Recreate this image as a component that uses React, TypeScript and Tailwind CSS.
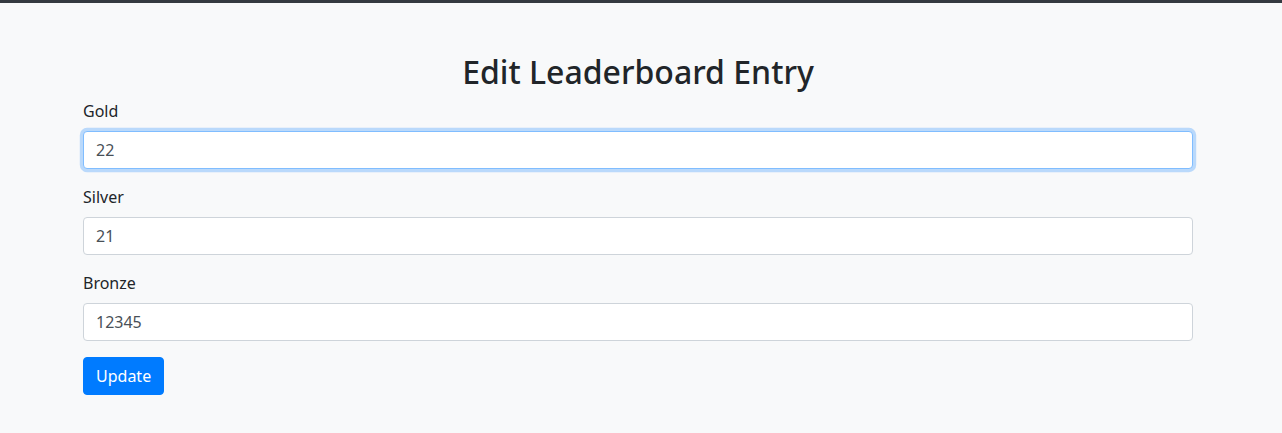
import { useEffect, useRef, useState } from "react"

const labelCls = "block mb-2 text-base leading-6 text-[#212529]"
const inputCls =
  "block w-full h-[38px] px-3 py-1.5 text-base leading-6 text-[#495057] bg-white border border-[#ced4da] rounded-[4px] outline-none"

export default function App() {
  const [gold, setGold] = useState("22")
  const [silver, setSilver] = useState("21")
  const [bronze, setBronze] = useState("12345")
  const goldRef = useRef<HTMLInputElement>(null)

  useEffect(() => {
    const el = goldRef.current
    if (!el) return
    el.focus()
    el.setSelectionRange(el.value.length, el.value.length)
  }, [])

  return (
    <div
      className="min-h-screen bg-[#f8f9fa] text-[#212529]"
      style={{ fontFamily: '"Noto Sans", "Open Sans", sans-serif' }}
    >
      <div className="h-[3px] bg-[#343a40]" />
      <div className="w-[1110px] ml-[83px] pt-[50px]">
        <h2 className="text-center text-[32px] leading-[38px] font-medium mb-2">
          Edit Leaderboard Entry
        </h2>
        <form onSubmit={(e) => e.preventDefault()}>
          <div className="mb-4">
            <label className={labelCls}>Gold</label>
            <input
              ref={goldRef}
              value={gold}
              onChange={(e) => setGold(e.target.value)}
              className={
                "block w-full h-[38px] px-3 py-1.5 text-base leading-6 text-[#495057] bg-white border border-[#80bdff] rounded-[4px] outline-none shadow-[0_0_0_3.2px_rgba(0,123,255,0.25)] caret-[#212529]"
              }
            />
          </div>
          <div className="mb-4">
            <label className={labelCls}>Silver</label>
            <input value={silver} onChange={(e) => setSilver(e.target.value)} className={inputCls} />
          </div>
          <div className="mb-4">
            <label className={labelCls}>Bronze</label>
            <input value={bronze} onChange={(e) => setBronze(e.target.value)} className={inputCls} />
          </div>
          <button
            type="submit"
            className="h-[38px] px-3 text-base leading-6 text-white bg-[#007bff] border border-[#007bff] rounded-[4px]"
          >
            Update
          </button>
        </form>
      </div>
    </div>
  )
}
